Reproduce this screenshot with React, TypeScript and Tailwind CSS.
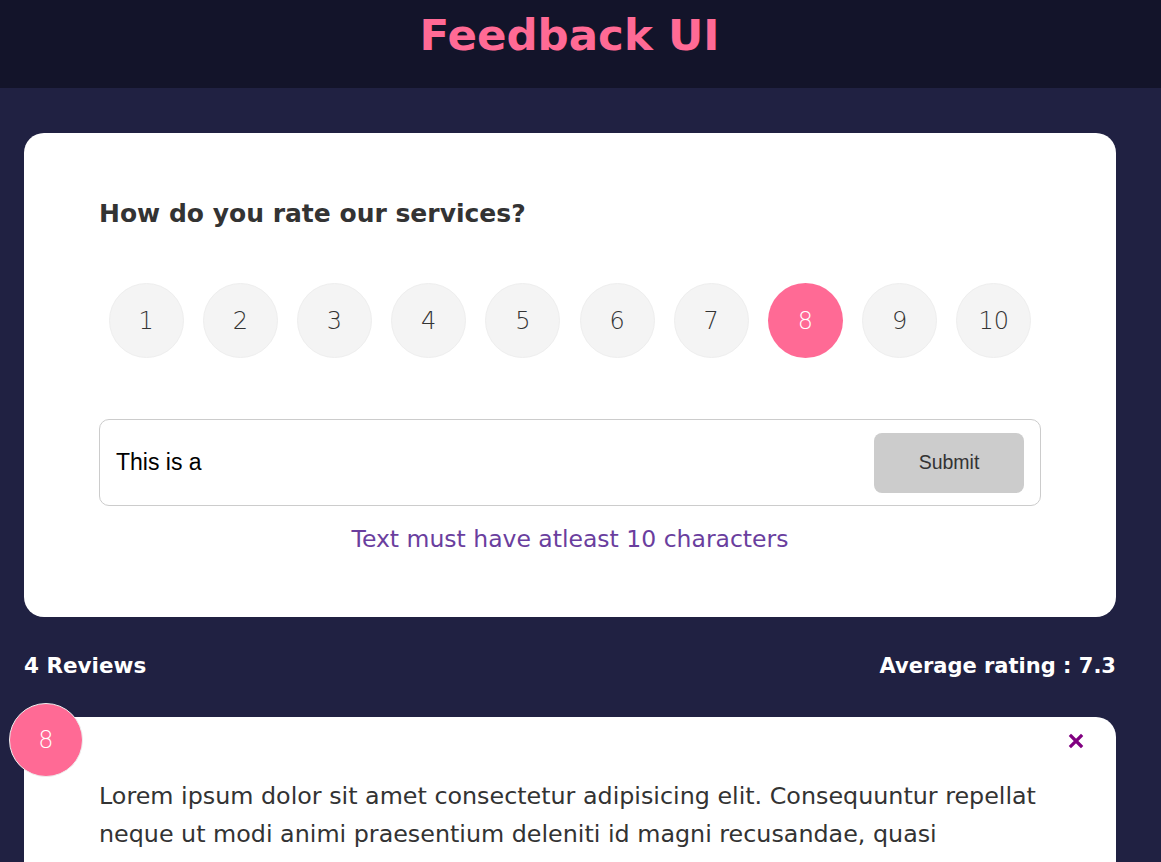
const FONT = "font-['DejaVu_Sans','Noto_Sans',sans-serif]"

const ratings = [1, 2, 3, 4, 5, 6, 7, 8, 9, 10]

function RatingSelect({ selected }: { selected: number }) {
  return (
    <ul className="mt-[50px] flex justify-around">
      {ratings.map((n) => (
        <li
          key={n}
          className={
            n === selected
              ? "flex size-[75px] items-center justify-center rounded-full bg-[#ff6a95] text-[24px] font-light text-white"
              : "flex size-[75px] items-center justify-center rounded-full border border-[#eee] bg-[#f4f4f4] text-[24px] font-light text-[#333]"
          }
        >
          {n}
        </li>
      ))}
    </ul>
  )
}

function FeedbackForm() {
  return (
    <div className="mt-[45px] h-[484px] rounded-[20px] bg-white px-[75px] pt-[62px]">
      <h2 className="text-[25px] font-bold leading-[38px] text-[#333]">How do you rate our services?</h2>
      <RatingSelect selected={8} />
      <div className="mt-[61px] flex h-[87px] items-center justify-between rounded-[10px] border border-[#ccc] pl-4 pr-4">
        <span className="font-['Liberation_Sans',Arial,sans-serif] text-[23px] text-black">This is a</span>
        <button className="h-[60px] w-[150px] rounded-[8px] bg-[#ccc] font-['Liberation_Sans',Arial,sans-serif] text-[19.5px] text-[#333]">
          Submit
        </button>
      </div>
      <p className="mt-[18px] text-center text-[23.5px] leading-[30px] text-[#6a3e9e]">
        Text must have atleast 10 characters
      </p>
    </div>
  )
}

function ReviewItem({ rating, text }: { rating: number; text: string }) {
  return (
    <div className="relative mt-[38px] rounded-t-[20px] bg-white px-[75px] pb-10 pt-[60px]">
      <div className="absolute -left-[15px] -top-[14px] flex size-[74px] items-center justify-center rounded-full border border-[#eee] bg-[#ff6a95] text-[24px] font-light text-white">
        {rating}
      </div>
      <button className="absolute right-[32px] top-[16px] text-[#800080]">
        <svg width="16" height="16" viewBox="0 0 16 16">
          <path d="M3 3 L13 13 M13 3 L3 13" stroke="currentColor" strokeWidth="3.2" strokeLinecap="square" />
        </svg>
      </button>
      <p className="text-[23.8px] leading-[38px] text-[#333]">{text}</p>
    </div>
  )
}

export default function App() {
  return (
    <div className={`min-h-screen bg-[#202142] ${FONT}`}>
      <header className="flex h-[88px] items-center justify-center bg-[#13142a] pb-[18px] pr-[22px]">
        <h1 className="text-[43.5px] font-bold leading-[52px] text-[#ff6a95]">Feedback UI</h1>
      </header>
      <main className="ml-6 w-[1092px]">
        <FeedbackForm />
        <div className="mt-[36px] flex items-center justify-between font-bold leading-[26px] text-white">
          <h4 className="text-[21.5px]">4 Reviews</h4>
          <h4 className="text-[21px]">Average rating : 7.3</h4>
        </div>
        <ReviewItem
          rating={8}
          text="Lorem ipsum dolor sit amet consectetur adipisicing elit. Consequuntur repellat neque ut modi animi praesentium deleniti id magni recusandae, quasi voluptate quo distinctio fugit illum optio aperiam."
        />
      </main>
    </div>
  )
}
